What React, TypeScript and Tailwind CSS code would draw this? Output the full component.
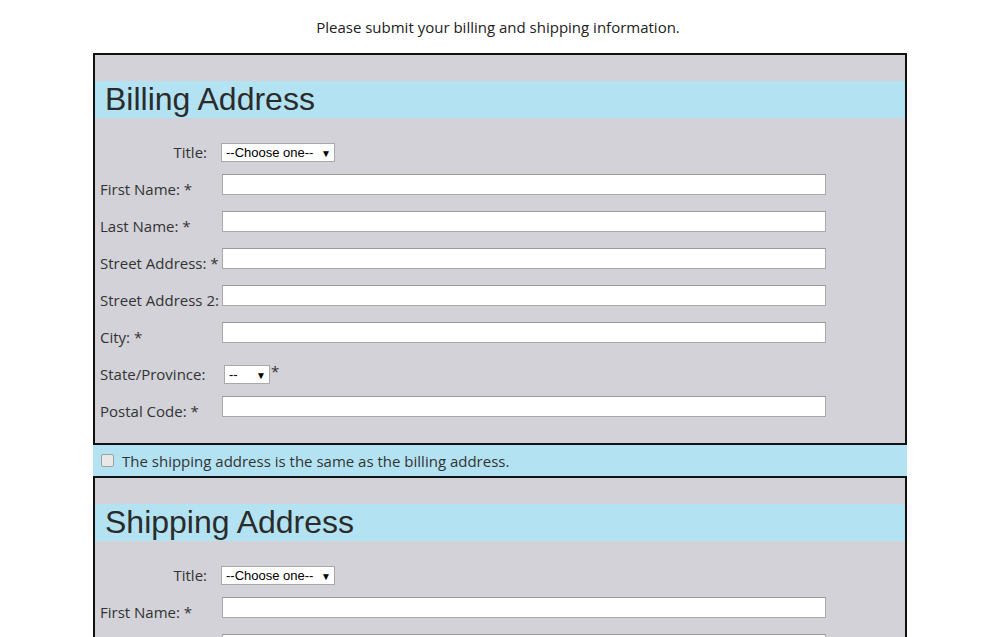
import React from "react";

const labelFont = { fontFamily: '"Open Sans", "Noto Sans", sans-serif' };

function Select({ text, width }: { text: string; width: string }) {
  return (
    <div
      className={`relative mt-[6px] h-[19px] ${width} border border-[#a9a9a9] bg-white text-[13px] leading-[17px] text-black`}
      style={{ fontFamily: '"Liberation Sans", Arial, sans-serif' }}
    >
      <span className="absolute left-[4px] top-0">{text}</span>
      <span className="absolute right-[3px] top-[1px] text-[10px]">▼</span>
    </div>
  );
}

function TextInput() {
  return <input type="text" className="h-[21px] w-[604px] border border-[#a9a9a9] border-t-[#9a9a9a] bg-white outline-none" />;
}

function Row({ label, children, right }: { label: string; children: React.ReactNode; right?: boolean }) {
  return (
    <div className="flex h-[37px] items-start">
      <div className={`w-[122px] shrink-0 pt-[5px] text-[15px] leading-[20px] text-[#333] ${right ? "pr-[15px] text-right" : ""}`} style={labelFont}>
        {label}
      </div>
      {children}
    </div>
  );
}

function AddressBox({ title }: { title: string }) {
  return (
    <div className="w-[814px] border-2 border-[#111] bg-[#d2d2d8] pt-[26px] pb-[10px]">
      <h2
        className="h-[37px] bg-[#b3e3f2] pl-[10px] text-[32px] leading-[37px] text-[#2b2b2b]"
        style={{ fontFamily: '"Liberation Sans", Arial, sans-serif' }}
      >
        {title}
      </h2>
      <div className="pl-[5px] pt-[19px]">
        <Row label="Title:" right>
          <div className="-ml-[1px]">
            <Select text="--Choose one--" width="w-[114px]" />
          </div>
        </Row>
        <Row label="First Name: *">
          <TextInput />
        </Row>
        <Row label="Last Name: *">
          <TextInput />
        </Row>
        <Row label="Street Address: *">
          <TextInput />
        </Row>
        <Row label="Street Address 2:">
          <TextInput />
        </Row>
        <Row label="City: *">
          <TextInput />
        </Row>
        <Row label="State/Province:">
          <div className="ml-[2px] flex items-start">
            <Select text="--" width="w-[46px]" />
            <span className="ml-[1px] mt-[2px] text-[15px] leading-[20px] text-[#333]" style={labelFont}>*</span>
          </div>
        </Row>
        <Row label="Postal Code: *">
          <TextInput />
        </Row>
      </div>
    </div>
  );
}

export default function App() {
  return (
    <div className="min-h-screen bg-white pb-10">
      <p className="pt-[17px] text-center text-[15px] leading-[20px] text-[#222]" style={labelFont}>
        Please submit your billing and shipping information.
      </p>
      <div className="ml-[93px] mt-[16px] w-[814px]">
        <AddressBox title="Billing Address" />
        <label className="flex h-[31px] items-center bg-[#b3e3f2] pl-[8px]" style={labelFont}>
          <input
            type="checkbox"
            className="h-[13px] w-[13px] appearance-none rounded-[2px] border border-[#a0a0a0] bg-[#e8e8e8]"
          />
          <span className="ml-[8px] text-[15px] leading-[20px] text-[#333]">
            The shipping address is the same as the billing address.
          </span>
        </label>
        <AddressBox title="Shipping Address" />
      </div>
    </div>
  );
}
